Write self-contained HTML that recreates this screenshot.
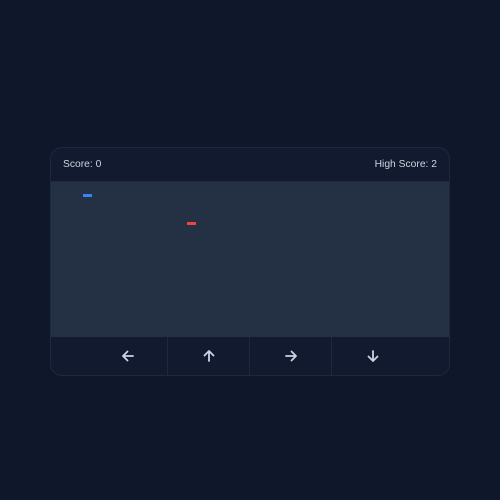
<!DOCTYPE html><html><head><style>
body{margin:0;width:500px;height:500px;background:#0f172a;font-family:"Liberation Sans",sans-serif;position:relative;overflow:hidden}
.card{position:absolute;left:50px;top:147px;width:398px;height:227px;border:1px solid #1e293b;border-radius:12px;background:#111a2e;overflow:hidden}
.hd{height:33px;display:flex;justify-content:space-between;align-items:center;padding:0 12px;color:#cbd5e1;font-size:10.3px;border-bottom:1px solid #1e293b}
.gm{position:absolute;left:0;top:34px;width:398px;height:155px;background:#243144}
.ctl{position:absolute;left:38px;top:189px;height:38px;display:flex}
.b{width:81px;display:flex;align-items:center;justify-content:center;border-left:1px solid #1e293b}
.b:first-child{border-left:none;width:78px}
</style></head><body>
<div class="card">
<div class="hd"><span>Score: 0</span><span>High Score: 2</span></div>
<div class="gm">
<div style="position:absolute;left:32px;top:12px;width:9px;height:3px;background:#3b82f6"></div>
<div style="position:absolute;left:136px;top:40px;width:9px;height:3px;background:#ef4444"></div>
</div>
<div class="ctl">
<div class="b"><svg width="14" height="14" viewBox="0 0 14 14" fill="none" stroke="#cbd5e1" stroke-width="1.8" stroke-linecap="round" stroke-linejoin="round"><path d="M12 7H2M6.5 2.5L2 7l4.5 4.5"/></svg></div>
<div class="b"><svg width="14" height="14" viewBox="0 0 14 14" fill="none" stroke="#cbd5e1" stroke-width="1.8" stroke-linecap="round" stroke-linejoin="round"><path d="M7 12V2M2.5 6.5L7 2l4.5 4.5"/></svg></div>
<div class="b"><svg width="14" height="14" viewBox="0 0 14 14" fill="none" stroke="#cbd5e1" stroke-width="1.8" stroke-linecap="round" stroke-linejoin="round"><path d="M2 7h10M7.5 2.5L12 7l-4.5 4.5"/></svg></div>
<div class="b"><svg width="14" height="14" viewBox="0 0 14 14" fill="none" stroke="#cbd5e1" stroke-width="1.8" stroke-linecap="round" stroke-linejoin="round"><path d="M7 2v10M2.5 7.5L7 12l4.5-4.5"/></svg></div>
</div>
</div>
</body></html>
